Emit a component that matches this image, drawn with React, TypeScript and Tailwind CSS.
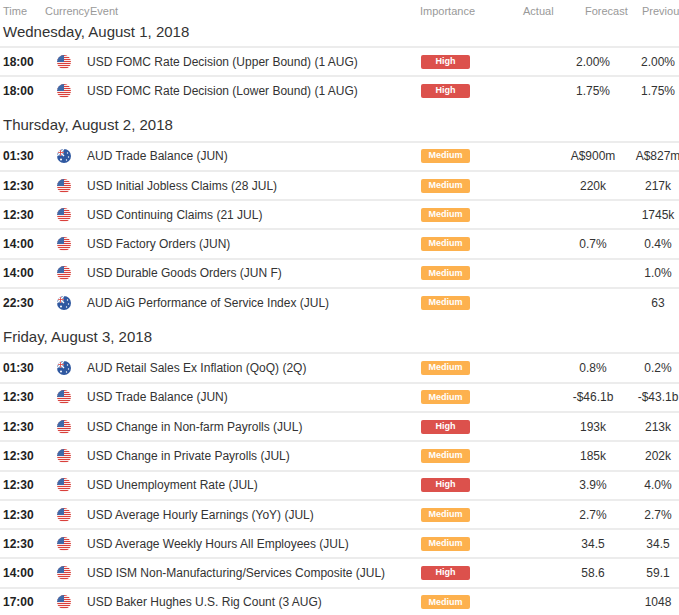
import React from "react";

type Row = [string, "US" | "AU", string, "H" | "M", string, string];

const sections: { title: string; rows: Row[] }[] = [
  {
    title: "Wednesday, August 1, 2018",
    rows: [
      ["18:00", "US", "USD FOMC Rate Decision (Upper Bound) (1 AUG)", "H", "2.00%", "2.00%"],
      ["18:00", "US", "USD FOMC Rate Decision (Lower Bound) (1 AUG)", "H", "1.75%", "1.75%"],
    ],
  },
  {
    title: "Thursday, August 2, 2018",
    rows: [
      ["01:30", "AU", "AUD Trade Balance (JUN)", "M", "A$900m", "A$827m"],
      ["12:30", "US", "USD Initial Jobless Claims (28 JUL)", "M", "220k", "217k"],
      ["12:30", "US", "USD Continuing Claims (21 JUL)", "M", "", "1745k"],
      ["14:00", "US", "USD Factory Orders (JUN)", "M", "0.7%", "0.4%"],
      ["14:00", "US", "USD Durable Goods Orders (JUN F)", "M", "", "1.0%"],
      ["22:30", "AU", "AUD AiG Performance of Service Index (JUL)", "M", "", "63"],
    ],
  },
  {
    title: "Friday, August 3, 2018",
    rows: [
      ["01:30", "AU", "AUD Retail Sales Ex Inflation (QoQ) (2Q)", "M", "0.8%", "0.2%"],
      ["12:30", "US", "USD Trade Balance (JUN)", "M", "-$46.1b", "-$43.1b"],
      ["12:30", "US", "USD Change in Non-farm Payrolls (JUL)", "H", "193k", "213k"],
      ["12:30", "US", "USD Change in Private Payrolls (JUL)", "M", "185k", "202k"],
      ["12:30", "US", "USD Unemployment Rate (JUL)", "H", "3.9%", "4.0%"],
      ["12:30", "US", "USD Average Hourly Earnings (YoY) (JUL)", "M", "2.7%", "2.7%"],
      ["12:30", "US", "USD Average Weekly Hours All Employees (JUL)", "M", "34.5", "34.5"],
      ["14:00", "US", "USD ISM Non-Manufacturing/Services Composite (JUL)", "H", "58.6", "59.1"],
      ["17:00", "US", "USD Baker Hughes U.S. Rig Count (3 AUG)", "M", "", "1048"],
    ],
  },
];

function Flag({ c }: { c: "US" | "AU" }) {
  if (c === "US")
    return (
      <svg width="14" height="14" viewBox="0 0 14 14">
        <defs>
          <clipPath id="cu"><circle cx="7" cy="7" r="7" /></clipPath>
        </defs>
        <g clipPath="url(#cu)">
          <rect width="14" height="14" fill="#fff" />
          {[0, 2, 4, 6, 8, 10, 12].map((y) => (
            <rect key={y} y={y} width="14" height="1.1" fill="#d9403b" />
          ))}
          <rect width="7" height="7" fill="#3f69a8" />
        </g>
      </svg>
    );
  return (
    <svg width="14" height="14" viewBox="0 0 14 14">
      <defs>
        <clipPath id="ca"><circle cx="7" cy="7" r="7" /></clipPath>
      </defs>
      <g clipPath="url(#ca)">
        <rect width="14" height="14" fill="#2f58a0" />
        <path d="M0 0L7 7M7 0L0 7" stroke="#fff" strokeWidth="1.4" />
        <path d="M3.5 0V7M0 3.5H7" stroke="#fff" strokeWidth="1.6" />
        <path d="M3.5 0V7M0 3.5H7" stroke="#d9403b" strokeWidth="0.8" />
        <circle cx="4" cy="10.5" r="1" fill="#fff" />
        <circle cx="10.5" cy="4" r="0.7" fill="#fff" />
        <circle cx="11.5" cy="8" r="0.7" fill="#fff" />
        <circle cx="9.5" cy="11" r="0.7" fill="#fff" />
      </g>
    </svg>
  );
}

export default function App() {
  return (
    <div className="w-[679px] h-[615px] overflow-hidden bg-white text-[#333]" style={{ fontFamily: '"Liberation Sans", Arial, sans-serif' }}>
      <div className="flex h-[22px] items-center whitespace-nowrap text-[11px] text-[#999]">
        <span className="w-[45px] shrink-0 pl-[3px]">Time</span>
        <span className="w-[45px] shrink-0">Currency</span>
        <span className="w-[330px] shrink-0">Event</span>
        <span className="w-[103px] shrink-0">Importance</span>
        <span className="w-[62px] shrink-0">Actual</span>
        <span className="w-[57px] shrink-0">Forecast</span>
        <span>Previous</span>
      </div>
      {sections.map((s, si) => (
        <div key={si}>
          <div className={`flex items-center pl-[3px] text-[15px] ${si === 0 ? "h-[24px] pb-[4px]" : "h-[36px] pt-[5px]"}`}>{s.title}</div>
          {s.rows.map((r, i) => (
            <div key={i} className="flex h-[29.3px] items-center border-t-2 border-[#ececec] text-[12px]">
              <span className="w-[57px] shrink-0 pl-[3px] font-bold text-[#222]">{r[0]}</span>
              <span className="w-[30px] shrink-0 flex items-center"><Flag c={r[1]} /></span>
              <span className="w-[332px] shrink-0 whitespace-nowrap">{r[2]}</span>
              <span className={`w-[49px] shrink-0 ml-[2px] h-[14px] flex items-center justify-center rounded-[2px] text-[9px] font-bold text-white ${r[3] === "H" ? "bg-[#dc514c]" : "bg-[#fdb14e]"}`}>
                {r[3] === "H" ? "High" : "Medium"}
              </span>
              <span className="w-[90px] shrink-0" />
              <span className="w-[66px] shrink-0 text-center">{r[4]}</span>
              <span className="w-[50px] shrink-0 ml-[7px] text-center">{r[5]}</span>
            </div>
          ))}
        </div>
      ))}
    </div>
  );
}
